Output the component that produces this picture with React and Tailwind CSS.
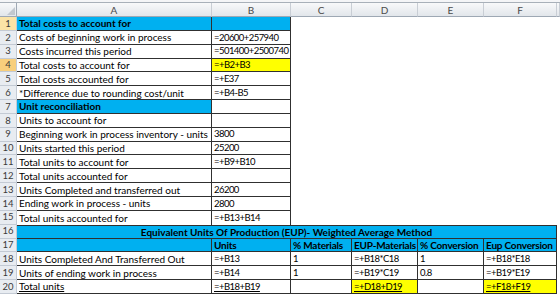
const COLS = "grid grid-cols-[17px_195px_79px_61px_66px_66px_73px_1fr]";
const LINE = "border-r border-b border-[#303030]";
const CYAN = "bg-[#00b0f0]";
const YELLOW = "bg-[#ffff00]";
const NUM = "text-[9.5px] tracking-[-0.55px]";

// rows 1-15: column A + B inside a bordered block
const TOP = [
  { n: 1, a: "Total costs to account for", b: "", head: true, hl: "soft" },
  { n: 2, a: "Costs of beginning work in process", b: "=20600+257940" },
  { n: 3, a: "Costs incurred this period", b: "=501400+2500740" },
  { n: 4, a: "Total costs to account for", b: "=+B2+B3", yellow: true, hl: "strong" },
  { n: 5, a: "Total costs accounted for", b: "=+E37" },
  { n: 6, a: "*Difference due to rounding cost/unit", b: "=+B4-B5" },
  { n: 7, a: "Unit reconciliation", b: "", head: true, onlyA: true },
  { n: 8, a: "Units to account for", b: "" },
  { n: 9, a: "Beginning work in process inventory - units", b: "3800" },
  { n: 10, a: "Units started this period", b: "25200" },
  { n: 11, a: "Total units to account for", b: "=+B9+B10" },
  { n: 12, a: "Total units accounted for", b: "" },
  { n: 13, a: "Units Completed and transferred out", b: "26200" },
  { n: 14, a: "Ending work in process - units", b: "2800" },
  { n: 15, a: "Total units accounted for", b: "=+B13+B14", last: true },
];

const EUP = [
  { n: 18, cells: ["Units Completed And Transferred Out", "=+B13", "1", "=+B18*C18", "1", "=+B18*E18"] },
  { n: 19, cells: ["Units of ending work in process", "=+B14", "1", "=+B19*C19", "0.8", "=+B19*E19"] },
  { n: 20, cells: ["Total units", "=+B18+B19", "", "=+D18+D19", "", "=+F18+F19"], total: true },
];

function RowNum({ n, hl }) {
  return (
    <div
      className={
        "flex items-center justify-center border-r border-b border-[#c3cad4] text-[9.5px] text-[#3a3a3a] " +
        (hl === "strong" ? "bg-[#f8cf7c]" : hl === "soft" ? "bg-[#fbe3a6]" : "bg-[#e8ecf1]")
      }
    >
      {n}
    </div>
  );
}

function Cell({ children, className = "" }) {
  return (
    <div className={"flex items-center pl-[2px] whitespace-nowrap overflow-hidden " + className}>
      {children}
    </div>
  );
}

export default function App() {
  return (
    <div className="w-[560px] h-[294px] overflow-hidden bg-white text-black text-[10px] leading-none font-['Lato','Liberation_Sans',sans-serif]">
      <div className="h-[3px] bg-[#f4f5f7] border-b border-[#a8b0b9]" />

      {/* column letters */}
      <div className={COLS + " h-[14px]"}>
        <div className="relative bg-gradient-to-b from-[#f8f9fa] to-[#e2e6eb] border-r border-b border-[#9ea8b4]">
          <svg className="absolute right-[1px] bottom-[1px]" width="8" height="8" viewBox="0 0 8 8">
            <polygon points="8,0 8,8 0,8" fill="#c2c8cf" />
          </svg>
        </div>
        {["A", "B", "C", "D", "E", "F", ""].map((l, i) => (
          <div
            key={i}
            className="flex items-center justify-center bg-gradient-to-b from-[#f8f9fa] to-[#e2e6eb] border-r border-b border-r-[#c9ced5] border-b-[#9ea8b4] text-[#4a4a4a] text-[10px]"
          >
            {l}
          </div>
        ))}
      </div>

      {TOP.map((r) => (
        <div key={r.n} className={COLS + " h-[13.85px]"}>
          <RowNum n={r.n} hl={r.hl} />
          <Cell className={(r.last ? "border-r border-[#303030] " : LINE + " ") + (r.head ? CYAN + " font-bold" : "")}>
            {r.a}
          </Cell>
          <Cell
            className={
              NUM +
              " " +
              (r.last ? "border-r border-[#303030] " : LINE + " ") +
              (r.yellow ? YELLOW : r.head && !r.onlyA ? CYAN : "")
            }
          >
            {r.b}
          </Cell>
          <div />
          <div />
          <div />
          <div />
          <div />
        </div>
      ))}

      {/* row 16: merged title */}
      <div className={COLS + " h-[13.85px]"}>
        <RowNum n={16} />
        <div className={"col-span-6 flex items-center justify-center font-bold border-t " + LINE + " " + CYAN}>
          Equivalent Units Of Production (EUP)- Weighted Average Method
        </div>
        <div />
      </div>

      {/* row 17: column captions */}
      <div className={COLS + " h-[13.85px]"}>
        <RowNum n={17} />
        {["", "Units", "% Materials", "EUP-Materials", "% Conversion", "Eup Conversion"].map((t, i) => (
          <Cell key={i} className={LINE + " font-bold tracking-[-0.2px] " + CYAN}>
            {t}
          </Cell>
        ))}
        <div />
      </div>

      {EUP.map((r) => (
        <div key={r.n} className={COLS + " h-[13.85px]"}>
          <RowNum n={r.n} />
          {r.cells.map((t, i) => (
            <Cell
              key={i}
              className={
                LINE +
                (i > 0 ? " " + NUM : "") +
                " " +
                (r.total && (i === 3 || i === 5) ? YELLOW : "") +
                (r.total && t ? " underline underline-offset-[1px]" : "")
              }
            >
              {t}
            </Cell>
          ))}
          <div />
        </div>
      ))}
    </div>
  );
}
